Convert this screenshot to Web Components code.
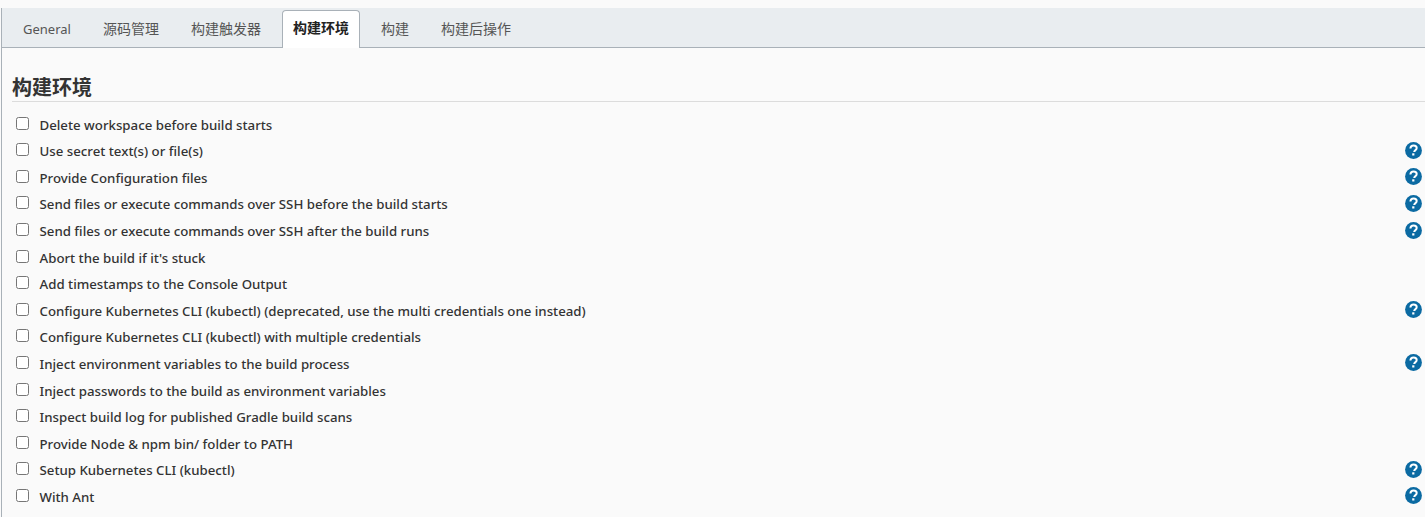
<!DOCTYPE html>
<html>
<head>
<meta charset="utf-8">
<style>
    html, body { margin: 0; padding: 0; background: #fafafa; }
    body { width: 1425px; height: 517px; overflow: hidden; font-family: "Noto Sans", "Noto Sans CJK SC", sans-serif; }
</style>
</head>
<body>
<config-panel>
    <tab-bar slot="tabs">
        <tab-item style="font-size:13px;line-height:35px">General</tab-item>
        <tab-item>源码管理</tab-item>
        <tab-item>构建触发器</tab-item>
        <tab-item active>构建环境</tab-item>
        <tab-item>构建</tab-item>
        <tab-item>构建后操作</tab-item>
    </tab-bar>
    <section-title>构建环境</section-title>
    <option-row>Delete workspace before build starts</option-row>
    <option-row help>Use secret text(s) or file(s)</option-row>
    <option-row help>Provide Configuration files</option-row>
    <option-row help>Send files or execute commands over SSH before the build starts</option-row>
    <option-row help>Send files or execute commands over SSH after the build runs</option-row>
    <option-row>Abort the build if it's stuck</option-row>
    <option-row>Add timestamps to the Console Output</option-row>
    <option-row help>Configure Kubernetes CLI (kubectl) (deprecated, use the multi credentials one instead)</option-row>
    <option-row>Configure Kubernetes CLI (kubectl) with multiple credentials</option-row>
    <option-row help>Inject environment variables to the build process</option-row>
    <option-row>Inject passwords to the build as environment variables</option-row>
    <option-row>Inspect build log for published Gradle build scans</option-row>
    <option-row>Provide Node &amp; npm bin/ folder to PATH</option-row>
    <option-row help>Setup Kubernetes CLI (kubectl)</option-row>
    <option-row help>With Ant</option-row>
</config-panel>
<script>
class ConfigPanel extends HTMLElement {
    connectedCallback() {
        this.attachShadow({ mode: 'open' });
        this.shadowRoot.innerHTML = `
            <style>
                :host {
                    display: block;
                    height: 509px;
                    margin: 8px 0 0 1px;
                    border-left: 1px solid #a9b1b8;
                    color: #333;
                }
            </style>
            <slot name="tabs"></slot>
            <slot></slot>
        `;
    }
}

class TabBar extends HTMLElement {
    connectedCallback() {
        this.attachShadow({ mode: 'open' });
        this.shadowRoot.innerHTML = `
            <style>
                :host {
                    display: flex;
                    align-items: flex-end;
                    gap: 10px;
                    box-sizing: border-box;
                    height: 40px;
                    padding-left: 10px;
                    background: #e9edf0;
                    border-bottom: 1px solid #a9b1b8;
                }
            </style>
            <slot></slot>
        `;
    }
}

class TabItem extends HTMLElement {
    connectedCallback() {
        this.attachShadow({ mode: 'open' });
        this.shadowRoot.innerHTML = `
            <style>
                :host {
                    display: block;
                    box-sizing: border-box;
                    height: 37px;
                    margin-bottom: -1px;
                    padding: 0 10px;
                    border: 1px solid transparent;
                    border-bottom: 0;
                    border-radius: 4px 4px 0 0;
                    font-size: 14px;
                    line-height: 33px;
                    color: #555;
                }
                :host([active]) {
                    background: #fff;
                    border-color: #a9b1b8;
                    color: #222;
                    font-weight: 600;
                    height: 38px;
                }
            </style>
            <slot></slot>
        `;
    }
}

class SectionTitle extends HTMLElement {
    connectedCallback() {
        this.attachShadow({ mode: 'open' });
        this.shadowRoot.innerHTML = `
            <style>
                :host {
                    display: block;
                    box-sizing: border-box;
                    height: 54px;
                    margin: 0 0 9.35px 10px;
                    padding-top: 26px;
                    border-bottom: 1px solid #dcdcdc;
                    font-size: 20px;
                    line-height: 27px;
                    font-weight: 700;
                    color: #333;
                }
            </style>
            <slot></slot>
        `;
    }
}

class OptionRow extends HTMLElement {
    connectedCallback() {
        this.attachShadow({ mode: 'open' });
        const help = this.hasAttribute('help');
        this.shadowRoot.innerHTML = `
            <style>
                :host {
                    display: flex;
                    align-items: center;
                    height: 26.6px;
                    padding-left: 14px;
                    font-size: 13.25px;
                    font-weight: 500;
                    color: #333;
                }
                .box {
                    box-sizing: border-box;
                    width: 13px;
                    height: 13px;
                    margin: -3px 10.5px 0 0;
                    flex: none;
                    background: #fff;
                    border: 1px solid #767676;
                    border-radius: 2.5px;
                }
                .label { flex: 1; }
                svg { flex: none; margin: -2px 3px 0 0; }
            </style>
            <span class="box"></span>
            <span class="label"><slot></slot></span>
            ${help ? `<svg width="17" height="17" viewBox="0 0 17 17" aria-hidden="true">
                <circle cx="8.5" cy="8.5" r="8.4" fill="#0b6aa2"/>
                <path d="M5.4 6.5c.1-1.9 1.4-3 3.2-3 1.8 0 3.1 1.1 3.1 2.6 0 1.1-.6 1.7-1.5 2.3-.7.5-1 .9-1 1.7" fill="none" stroke="#fff" stroke-width="2"/>
                <rect x="7.2" y="11.3" width="2.2" height="2.2" fill="#fff"/>
            </svg>` : ''}
        `;
    }
}

customElements.define('config-panel', ConfigPanel);
customElements.define('tab-bar', TabBar);
customElements.define('tab-item', TabItem);
customElements.define('section-title', SectionTitle);
customElements.define('option-row', OptionRow);
</script>
</body>
</html>
